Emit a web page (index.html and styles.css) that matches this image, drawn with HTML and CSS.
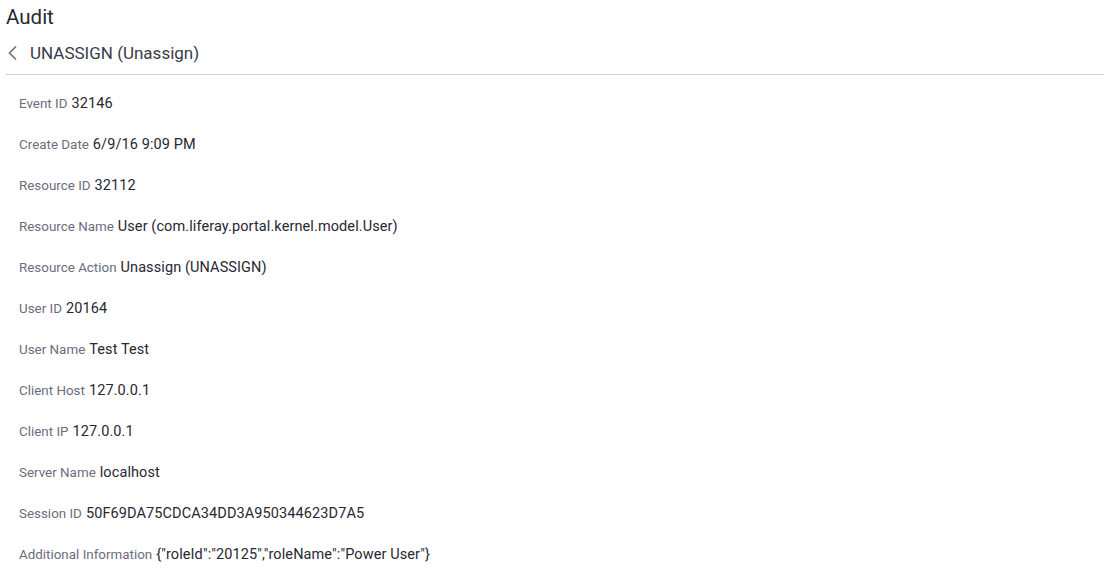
FILE: index.html
```html
<!DOCTYPE html>
<html>
<head>
<meta charset="utf-8">
<link rel="stylesheet" href="styles.css">
</head>
<body>
<div class="page">
  <h1 class="title">Audit</h1>
  <div class="header">
    <a class="back" href="#"><svg width="12" height="16" viewBox="0 0 12 16"><path d="M9 1.5 L2.5 8 L9 14.5" fill="none" stroke="#6b6c7e" stroke-width="1.6"/></svg></a>
    <span class="header-text">UNASSIGN (Unassign)</span>
  </div>
  <div class="details">
    <div class="row"><span class="label">Event ID</span> <span class="value">32146</span></div>
    <div class="row"><span class="label">Create Date</span> <span class="value">6/9/16 9:09 PM</span></div>
    <div class="row"><span class="label">Resource ID</span> <span class="value">32112</span></div>
    <div class="row"><span class="label">Resource Name</span> <span class="value">User (com.liferay.portal.kernel.model.User)</span></div>
    <div class="row"><span class="label">Resource Action</span> <span class="value">Unassign (UNASSIGN)</span></div>
    <div class="row"><span class="label">User ID</span> <span class="value">20164</span></div>
    <div class="row"><span class="label">User Name</span> <span class="value">Test Test</span></div>
    <div class="row"><span class="label">Client Host</span> <span class="value">127.0.0.1</span></div>
    <div class="row"><span class="label">Client IP</span> <span class="value">127.0.0.1</span></div>
    <div class="row"><span class="label">Server Name</span> <span class="value">localhost</span></div>
    <div class="row"><span class="label">Session ID</span> <span class="value">50F69DA75CDCA34DD3A950344623D7A5</span></div>
    <div class="row"><span class="label">Additional Information</span> <span class="value">{"roleId":"20125","roleName":"Power User"}</span></div>
  </div>
</div>
</body>
</html>
```
FILE: styles.css
```css
html, body {
  margin: 0;
  padding: 0;
  background: #fff;
}
body {
  font-family: "Roboto", "Liberation Sans", sans-serif;
  color: #272833;
}
.page {
  padding: 0 5px 0 6px;
}
.title {
  margin: 0;
  padding-top: 4px;
  font-size: 20.5px;
  font-weight: 400;
  line-height: 26px;
  color: #272833;
}
.header {
  display: flex;
  align-items: center;
  height: 44px;
  border-bottom: 1px solid #cdced9;
}
.back {
  display: flex;
  width: 23px;
  padding-left: 1px;
  padding-top: 1px;
}
.header-text {
  font-size: 17px;
  padding-top: 2px;
  color: #393a4a;
}
.details {
  padding: 17px 0 0 13px;
}
.row {
  height: 41px;
  line-height: 22px;
}
.label {
  font-size: 13.4px;
  color: #6b6c7e;
}
.value {
  font-size: 14.5px;
  letter-spacing: 0.1px;
  color: #272833;
}
```
